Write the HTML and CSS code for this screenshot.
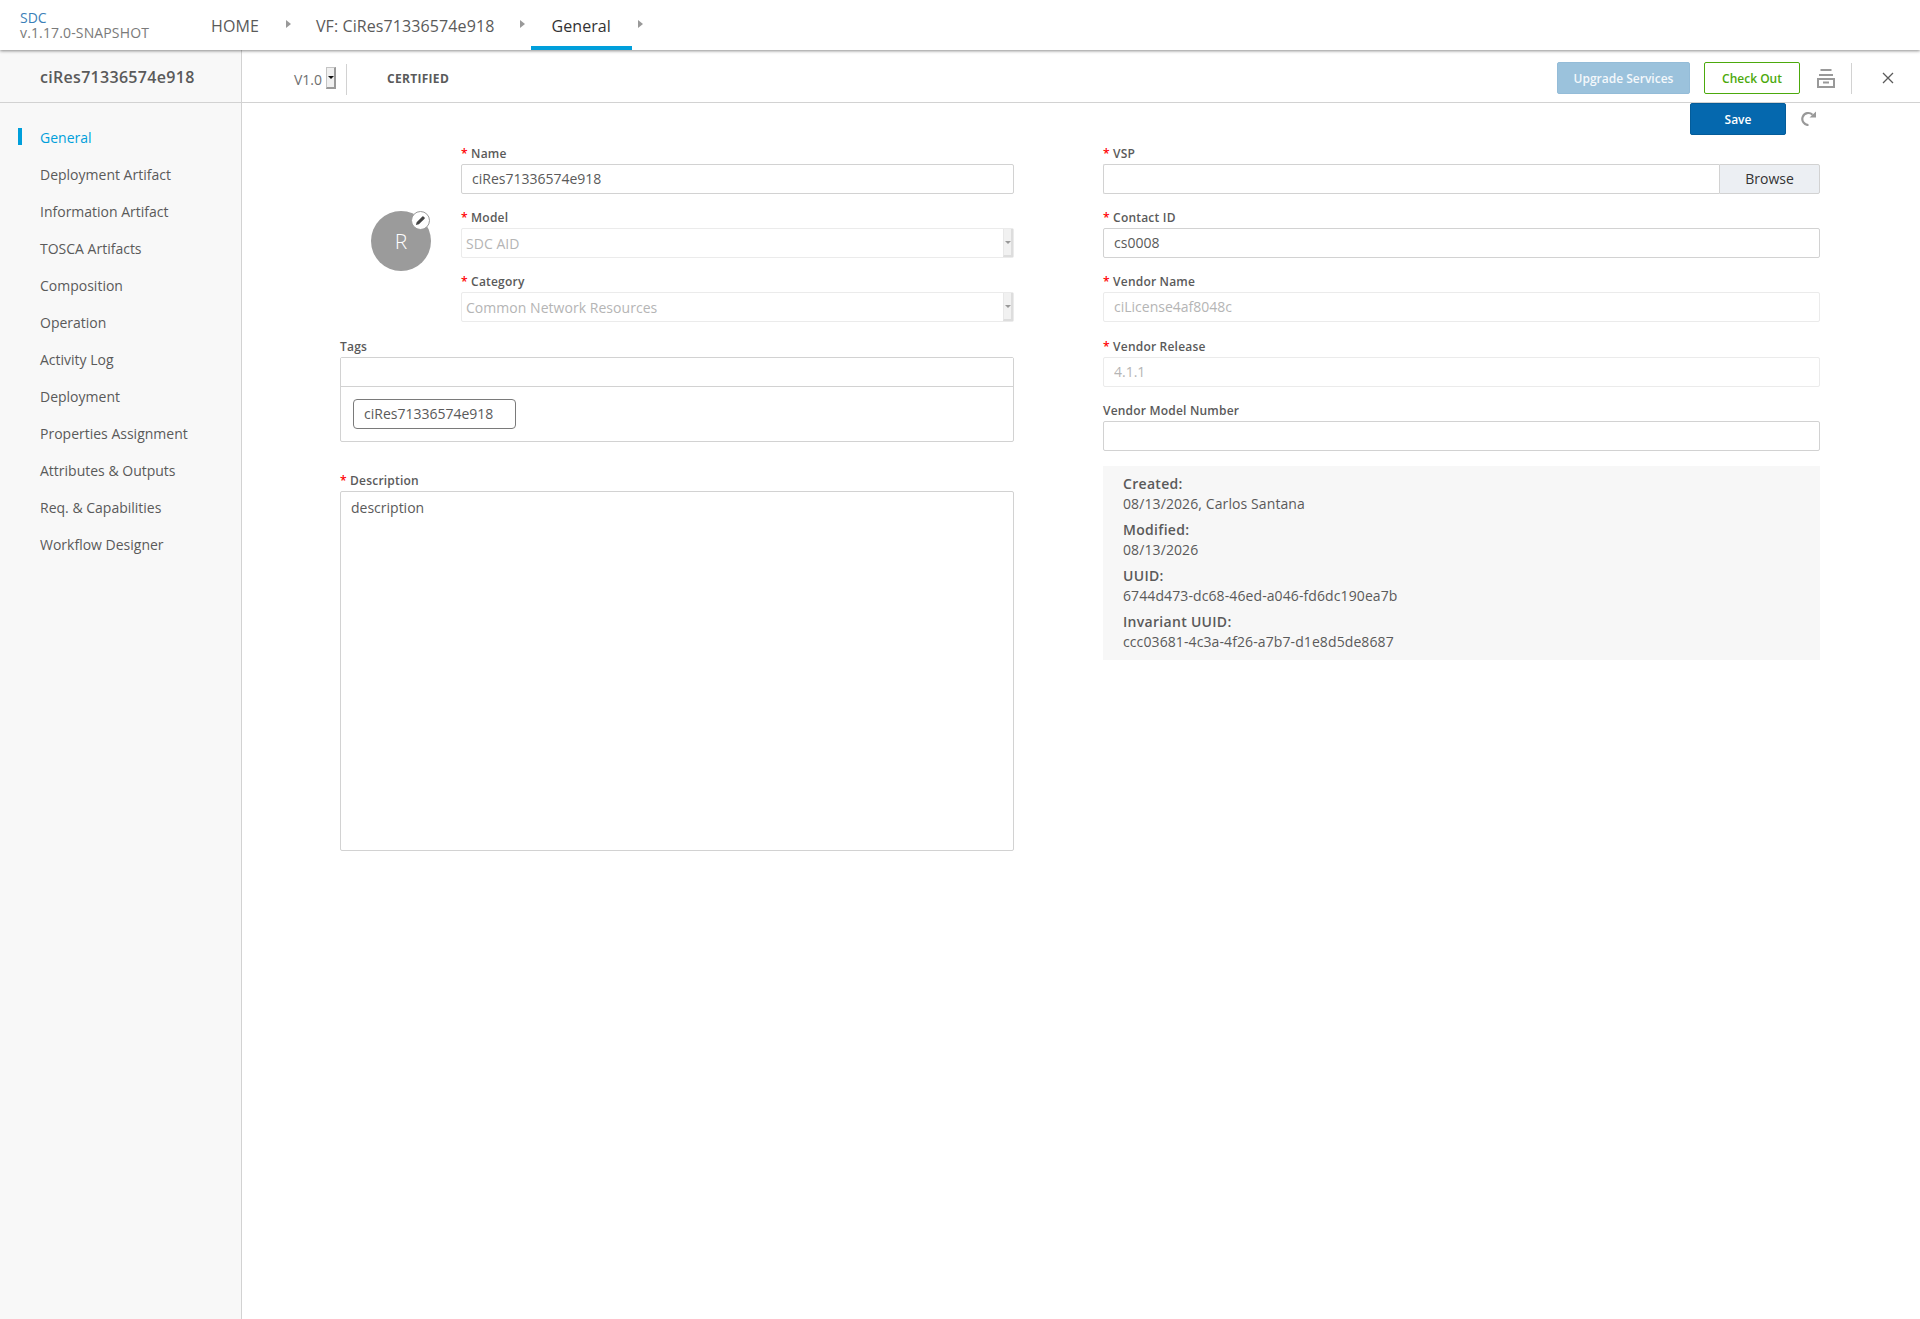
FILE: index.html
```html
<!DOCTYPE html>
<html lang="en">
<head>
<meta charset="utf-8">
<title>SDC</title>
<link rel="stylesheet" href="styles.css">
</head>
<body>
<header class="topbar">
  <div class="brand"><div class="brand-name">SDC</div><div class="brand-ver">v.1.17.0-SNAPSHOT</div></div>
  <nav class="crumbs">
    <a class="crumb">HOME</a><span class="caret"></span>
    <a class="crumb">VF: CiRes71336574e918</a><span class="caret caret-tight"></span>
    <a class="crumb active">General</a><span class="caret caret-end"></span>
  </nav>
</header>
<div class="app">
  <aside class="side">
    <div class="side-title">ciRes71336574e918</div>
    <ul class="menu">
      <li class="active">General</li>
      <li>Deployment Artifact</li>
      <li>Information Artifact</li>
      <li>TOSCA Artifacts</li>
      <li>Composition</li>
      <li>Operation</li>
      <li>Activity Log</li>
      <li>Deployment</li>
      <li>Properties Assignment</li>
      <li>Attributes &amp; Outputs</li>
      <li>Req. &amp; Capabilities</li>
      <li>Workflow Designer</li>
    </ul>
  </aside>
  <main class="main">
    <div class="toolbar">
      <div class="version"><span>V1.0</span><span class="ver-btn"><i></i></span></div>
      <div class="status">CERTIFIED</div>
      <div class="actions">
        <button class="btn btn-upgrade">Upgrade Services</button>
        <button class="btn btn-checkout">Check Out</button>
        <svg class="ico-archive" width="18" height="19" viewBox="0 0 18 19" fill="none" stroke="#999" stroke-width="2"><path d="M3.500 1h11M2 6h14"/><path d="M1 10h16v8H1z"/><path d="M6 13.500h6"/></svg>
        <span class="act-sep"></span>
        <svg class="ico-close" width="12" height="12" viewBox="0 0 12 12" fill="none" stroke="#5a5a5a" stroke-width="1.300"><path d="M1 1l10 10M11 1L1 11"/></svg>
      </div>
    </div>
    <div class="savebar">
      <button class="btn btn-save">Save</button>
      <svg class="ico-redo" width="15" height="15" viewBox="0 0 15 15" fill="none" stroke="#999" stroke-width="2.200"><path d="M11.500 3.700A6 6 0 1 0 7.500 14"/><path d="M8.500 6.500h6.500V.500z" stroke="none" fill="#999"/></svg>
    </div>
    <form class="form">
      <div class="col col-left">
        <div class="identity">
          <div class="avatar-wrap">
            <div class="avatar">R
              <span class="pencil"><svg width="11" height="11" viewBox="0 0 10 10"><path d="M.8 9.200l.7-2.700L6.700 1.300a.7.7 0 0 1 1 0l1 1a.7.7 0 0 1 0 1L3.500 8.500z" fill="#444"/></svg></span>
            </div>
          </div>
          <div class="identity-fields">
            <div class="field"><label><b>*</b> Name</label><input class="inp" value="ciRes71336574e918"></div>
            <div class="field"><label><b>*</b> Model</label><div class="sel"><span>SDC AID</span><span class="sel-btn"><i></i></span></div></div>
            <div class="field"><label><b>*</b> Category</label><div class="sel"><span>Common Network Resources</span><span class="sel-btn"><i></i></span></div></div>
          </div>
        </div>
        <div class="field field-tags"><label>Tags</label>
          <div class="tags"><input class="tags-input"><div class="tags-list"><span class="tag">ciRes71336574e918</span></div></div>
        </div>
        <div class="field field-desc"><label><b>*</b> Description</label><textarea class="desc">description</textarea></div>
      </div>
      <div class="col col-right">
        <div class="field"><label><b>*</b> VSP</label><div class="browse"><input class="inp browse-inp"><span class="browse-btn">Browse</span></div></div>
        <div class="field"><label><b>*</b> Contact ID</label><input class="inp" value="cs0008"></div>
        <div class="field"><label><b>*</b> Vendor Name</label><input class="inp disabled" value="ciLicense4af8048c" disabled></div>
        <div class="field field-release"><label><b>*</b> Vendor Release</label><input class="inp disabled" value="4.1.1" disabled></div>
        <div class="field"><label>Vendor Model Number</label><input class="inp"></div>
        <div class="info">
          <h5>Created:</h5><p>08/13/2026, Carlos Santana</p>
          <h5>Modified:</h5><p>08/13/2026</p>
          <h5>UUID:</h5><p>6744d473-dc68-46ed-a046-fd6dc190ea7b</p>
          <h5>Invariant UUID:</h5><p>ccc03681-4c3a-4f26-a7b7-d1e8d5de8687</p>
        </div>
      </div>
    </form>
  </main>
</div>
</body>
</html>
```
FILE: styles.css
```css
* { box-sizing: border-box; }
html, body { margin: 0; height: 100%; }
body { font-family: "Open Sans", "Noto Sans", sans-serif; color: #5a5a5a; background: #fff; height: 1319px; overflow: hidden; display: flex; flex-direction: column; }

.topbar { height: 50px; flex: none; display: flex; align-items: stretch; background: #fff; box-shadow: 0 1px 3px rgba(0,0,0,.45); position: relative; z-index: 2; }
.brand { width: 211px; padding: 10px 0 0 20px; font-size: 14px; line-height: 15px; }
.brand-name { color: #3b7fb8; }
.brand-ver { color: #7a7a7a; letter-spacing: .14px; }
.crumbs { display: flex; align-items: stretch; }
.crumb { font-size: 16px; color: #5a5a5a; line-height: 52px; height: 50px; letter-spacing: .1px; }
.crumb.active { color: #333; padding: 0 20px; border-bottom: 4px solid #009fdb; width: 101px; }
.caret { width: 0; height: 8px; margin: 20px 25px 0 27px; border-left: 5px solid #999; border-top: 4px solid transparent; border-bottom: 4px solid transparent; }
.caret-tight { margin: 20px 6px 0 26px; }
.caret-end { margin: 20px 0 0 6px; }

.app { flex: 1; display: flex; min-height: 0; }
.side { width: 242px; flex: none; background: #f8f8f8; border-right: 1px solid #d2d2d2; }
.side-title { height: 53px; border-bottom: 1px solid #d2d2d2; font-size: 16px; font-weight: 600; letter-spacing: .3px; color: #5a5a5a; line-height: 54px; padding-left: 40px; }
.menu { list-style: none; margin: 16px 0 0; padding: 0; }
.menu li { height: 37px; line-height: 37px; font-size: 14px; padding-left: 40px; color: #5a5a5a; position: relative; }
.menu li.active { color: #009fdb; }
.menu li.active::before { content: ""; position: absolute; left: 18px; top: 9px; width: 4px; height: 17px; background: #009fdb; }

.main { flex: 1; min-width: 0; }
.toolbar { height: 53px; padding-top: 4px; border-bottom: 1px solid #d2d2d2; display: flex; align-items: center; }
.version { display: flex; align-items: center; margin: 3px 0 0 52px; width: 53px; height: 31px; border-right: 1px solid #d2d2d2; font-size: 14px; color: #6f6f6f; gap: 4px; }
.version > span:first-child { margin-top: -1px; }
.ver-btn { width: 10px; height: 22px; background: #f0f0f0; border: 1px solid #c4c4c4; border-right: 2px solid #999; border-bottom: 2px solid #999; display: flex; justify-content: center; padding-top: 8px; margin-top: -3px; }
.ver-btn i { width: 0; height: 0; border-left: 3px solid transparent; border-right: 3px solid transparent; border-top: 3px solid #111; }
.status { font-size: 12px; font-weight: 700; letter-spacing: .3px; color: #5a5a5a; margin-left: 40px; }
.actions { margin-left: auto; display: flex; align-items: center; padding-right: 26px; }
.btn { font-family: inherit; font-size: 12px; font-weight: 600; border-radius: 2px; height: 32px; cursor: pointer; }
.btn-upgrade { width: 133px; background: #9bc2dc; border: 1px solid #94bcd8; color: #f4f8fb; }
.btn-checkout { width: 96px; background: #fff; border: 1px solid #4ca90c; color: #4ca90c; margin-left: 14px; }
.ico-archive { margin-left: 17px; }
.act-sep { width: 1px; height: 31px; background: #d2d2d2; margin-left: 16px; }
.ico-close { margin-left: 30px; }

.savebar { display: flex; align-items: center; height: 32px; padding-left: 1448px; }
.btn-save { width: 96px; background: #0568ae; border: 1px solid #045c9a; color: #fff; }
.ico-redo { margin: -2px 0 0 15px; }

.form { display: flex; margin: 0 0 0 98px; padding-top: 10px; }
.col { display: flex; flex-direction: column; }
.col-left { width: 674px; }
.col-right { width: 717px; margin-left: 89px; }
.identity { display: flex; }
.avatar-wrap { width: 121px; flex: none; padding: 66px 0 0 31px; }
.avatar { width: 60px; height: 60px; border-radius: 50%; background: #9b9b9b; color: #fff; font-size: 21px; font-weight: 300; display: flex; align-items: center; justify-content: center; position: relative; }
.pencil { position: absolute; right: 1px; top: 0; width: 19px; height: 19px; border-radius: 50%; background: #fff; border: 1px solid #9b9b9b; display: flex; align-items: center; justify-content: center; }
.identity-fields { flex: 1; min-width: 0; }
.field { height: 64px; flex: none; }
.field label { display: block; height: 19px; font-size: 12px; font-weight: 600; line-height: 17px; letter-spacing: .2px; color: #5a5a5a; }
.field label b { color: #f00; font-weight: 600; }
.inp { width: 100%; height: 30px; border: 1px solid #d2d2d2; border-radius: 2px; padding: 0 10px 1px; font: 14px "Open Sans", sans-serif; color: #5a5a5a; outline: none; background: #fff; display: block; }
.inp.disabled { border-color: #ebebeb; color: #b5b5b5; background: #fff; }
.sel { height: 30px; border: 1px solid #ebebeb; border-radius: 2px; display: flex; align-items: center; justify-content: space-between; font-size: 14px; letter-spacing: .04px; color: #b5b5b5; padding-left: 4px; }
.sel-btn { width: 10px; height: 28px; background: #f1f1f1; border-left: 1px solid #e8e8e8; border-right: 2px solid #ddd; border-bottom: 2px solid #ddd; display: flex; justify-content: center; padding-top: 12px; }
.sel-btn i { width: 0; height: 0; border-left: 3px solid transparent; border-right: 3px solid transparent; border-top: 3px solid #999; }
.field-tags { height: auto; margin-top: 1px; }
.tags { border: 1px solid #d2d2d2; border-radius: 2px; height: 85px; }
.tags-input { display: block; width: 100%; height: 29px; border: 0; border-bottom: 1px solid #d2d2d2; outline: none; }
.tags-list { padding: 12px 0 0 12px; }
.tag { display: inline-block; height: 30px; border: 1px solid #7a7a7a; border-radius: 4px; font-size: 14px; line-height: 28px; padding-left: 10px; white-space: nowrap; color: #5a5a5a; width: 163px; vertical-align: top; }
.field-desc { height: auto; margin-top: 30px; }
.desc { display: block; width: 100%; height: 360px; border: 1px solid #d2d2d2; border-radius: 2px; padding: 6px 10px; font: 14px/20px "Open Sans", sans-serif; color: #5a5a5a; resize: none; outline: none; }
.browse { display: flex; }
.browse-inp { flex: 1; border-right: 0; border-radius: 2px 0 0 2px; }
.browse-btn { width: 101px; height: 30px; background: #eceff3; border: 1px solid #d2d2d2; border-radius: 0 2px 2px 0; text-align: center; font-size: 14px; line-height: 28px; color: #333; }
.field-release { margin-top: 1px; }
.info { background: #f7f7f7; padding: 8px 20px; height: 194px; width: 100%; }
.info h5 { margin: 0; font-size: 14px; font-weight: 600; letter-spacing: .3px; line-height: 20px; color: #5a5a5a; }
.info p { margin: 0 0 6px; font-size: 14px; letter-spacing: .1px; line-height: 20px; color: #5a5a5a; }
```
